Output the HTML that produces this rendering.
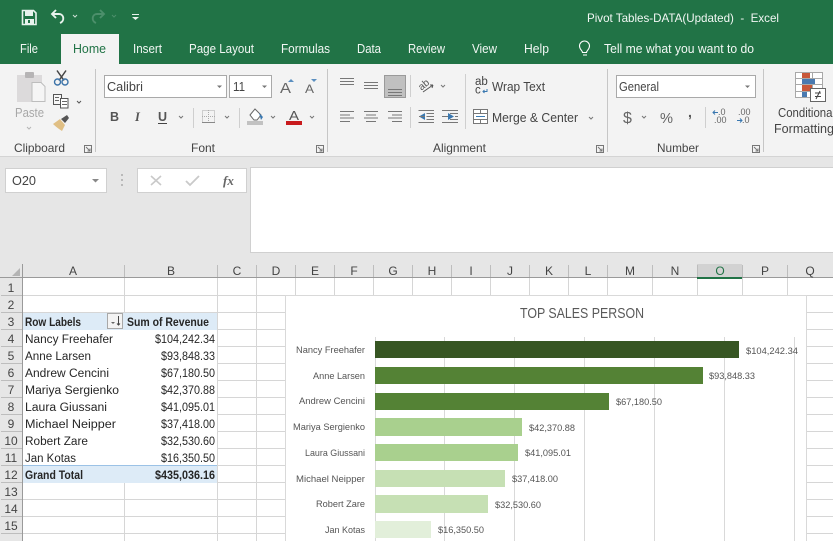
<!DOCTYPE html>
<html><head><meta charset="utf-8"><title>Pivot Tables-DATA(Updated) - Excel</title>
<style>
html,body{margin:0;padding:0;background:#fff;overflow:hidden}
svg{display:block;font-family:"Liberation Sans",sans-serif}
.w{fill:#f2f7f4}.t{fill:#444}.c{fill:#262626}.l{stroke:#777;stroke-width:1;fill:none}
.g{stroke:#d6d6d6;stroke-width:1}.ch{stroke:#777;stroke-width:1;fill:none}
.h{fill:#444;font-size:12px;text-anchor:middle}
.n{fill:#555;font-size:9.5px}
</style></head><body>
<svg width="833" height="541" viewBox="0 0 833 541" xmlns="http://www.w3.org/2000/svg">
<!-- title bar -->
<rect width="833" height="64" fill="#217346"/>
<path d="M22.500 10.500h11l2.500 2.500v11.500h-13.500z" fill="none" stroke="#e8f3ed" stroke-width="1.600"/>
<rect x="25" y="11" width="8" height="5" fill="#e8f3ed"/><rect x="25" y="19" width="9" height="5" fill="#e8f3ed"/><rect x="28" y="20" width="2" height="3" fill="#217346"/>
<path d="M56 10l-4 4 4 4M52 14h7c5 0 6 7 1 9" fill="none" stroke="#e8f3ed" stroke-width="1.900"/>
<path d="M73 15l2 2 2-2" fill="none" stroke="#cfe0d6"/>
<path d="M100 10l4 4-4 4M104 14h-7c-5 0-6 7-1 9" fill="none" stroke="#4c8f6b" stroke-width="1.900"/>
<path d="M112 15l2 2 2-2" fill="none" stroke="#4c8f6b"/>
<rect x="132" y="14" width="7" height="1" fill="#e8f3ed"/><path d="M132 17h7l-3.500 3z" fill="#e8f3ed"/>
<text x="587" y="22" class="w" font-size="12" textLength="192" lengthAdjust="spacingAndGlyphs" xml:space="preserve">Pivot Tables-DATA(Updated)  -  Excel</text>
<!-- tabs -->
<rect x="61" y="34" width="58" height="31" fill="#f3f3f3"/>
<g font-size="12.500">
<text x="20" y="53" class="w" textLength="18" lengthAdjust="spacingAndGlyphs">File</text>
<text x="73" y="53" fill="#217346" textLength="33" lengthAdjust="spacingAndGlyphs">Home</text>
<text x="133" y="53" class="w" textLength="29" lengthAdjust="spacingAndGlyphs">Insert</text>
<text x="189" y="53" class="w" textLength="65" lengthAdjust="spacingAndGlyphs">Page Layout</text>
<text x="281" y="53" class="w" textLength="49" lengthAdjust="spacingAndGlyphs">Formulas</text>
<text x="357" y="53" class="w" textLength="24" lengthAdjust="spacingAndGlyphs">Data</text>
<text x="408" y="53" class="w" textLength="37" lengthAdjust="spacingAndGlyphs">Review</text>
<text x="472" y="53" class="w" textLength="25" lengthAdjust="spacingAndGlyphs">View</text>
<text x="524" y="53" class="w" textLength="25" lengthAdjust="spacingAndGlyphs">Help</text>
<text x="604" y="53" class="w" textLength="150" lengthAdjust="spacingAndGlyphs">Tell me what you want to do</text>
</g>
<path d="M583 55h4M582.500 52.500c0-2-3-3-3-6.500a5 5 0 0 1 10 0c0 3.500-3 4.500-3 6.500z" fill="none" stroke="#fff" stroke-width="1.100"/>
<!-- ribbon -->
<rect y="64" width="833" height="92" fill="#f3f3f3"/>
<rect y="156" width="833" height="108" fill="#e6e6e6"/>
<rect y="156" width="833" height="1" fill="#d4d4d4"/>
<g fill="#c6c6c6"><rect x="95" y="69" width="1" height="83"/><rect x="327" y="69" width="1" height="83"/><rect x="607" y="69" width="1" height="83"/><rect x="763" y="69" width="1" height="83"/></g>
<!-- clipboard -->
<rect x="17" y="75" width="25" height="27" fill="#dcdadb"/><rect x="25" y="72" width="9" height="6" rx="1" fill="#b6b4b5"/>
<path d="M32 82.500h9l4 4v15h-13z" fill="#f5f5f5" stroke="#bdbdbd"/>
<text x="15" y="117" font-size="13" fill="#a8a8a8" textLength="29" lengthAdjust="spacingAndGlyphs">Paste</text>
<path d="M27 127l2 2 2-2" fill="none" stroke="#b5b5b5"/>
<path d="M57 70.500l7 10M66 70.500l-7 10" stroke="#444" stroke-width="1.500"/><circle cx="57.500" cy="82" r="3" fill="none" stroke="#3c73a8" stroke-width="1.400"/><circle cx="65" cy="82" r="3" fill="none" stroke="#3c73a8" stroke-width="1.400"/>
<path d="M53.500 94.500h8v10h-8z" fill="#f6f6f6" stroke="#555"/>
<path d="M60.500 98.500h7.500v9.500h-7.500z" fill="#fff" stroke="#555"/>
<path d="M55 97.500h4M55 100.500h4M62 101.500h5M62 104.500h5" stroke="#666"/>
<path d="M77 101l2 2 2-2" fill="none" stroke="#555"/>
<path d="M53 124l7-5 5 6-3 6c-3-2-6-4-9-7z" fill="#e0bf84"/><path d="M61 119l6-4 2 3-4 5z" fill="#555"/>
<text x="14" y="152" font-size="12" fill="#444" textLength="51" lengthAdjust="spacingAndGlyphs">Clipboard</text>
<path d="M84.500 145.500h7v7h-7z" class="ch"/><path d="M86 147l4 4M90 148.500v2.500h-2.500" class="ch"/>
<!-- font -->
<rect x="104.500" y="75.500" width="122" height="22" fill="#fff" stroke="#a9a9a9"/>
<rect x="229.500" y="75.500" width="42" height="22" fill="#fff" stroke="#a9a9a9"/>
<text x="107" y="91" font-size="12.500" fill="#444" textLength="36" lengthAdjust="spacingAndGlyphs">Calibri</text>
<text x="233" y="91" font-size="12.500" fill="#444" textLength="12" lengthAdjust="spacingAndGlyphs">11</text>
<path d="M217 85.500h5l-2.500 2.500zM262 85.500h5l-2.500 2.500z" fill="#777"/>
<text x="280" y="93" font-size="15" fill="#666" textLength="11" lengthAdjust="spacingAndGlyphs">A</text>
<path d="M288 82l3-3 3 3z" fill="#5b8fc0"/>
<text x="305" y="93" font-size="12" fill="#666" textLength="9" lengthAdjust="spacingAndGlyphs">A</text>
<path d="M311 79h6l-3 3z" fill="#5b8fc0"/>
<text x="110" y="121" font-size="12.500" font-weight="700" fill="#555">B</text>
<text x="135" y="121" font-size="12.500" font-style="italic" font-family="Liberation Serif" fill="#555" font-weight="700">I</text>
<text x="158" y="121" font-size="12.500" font-weight="700" fill="#555">U</text><rect x="158" y="123" width="9" height="1" fill="#444"/>
<path d="M179 116l2 2 2-2M225 116l2 2 2-2M271 116l2 2 2-2M310 116l2 2 2-2" fill="none" stroke="#777"/>
<rect x="193" y="108" width="1" height="20" fill="#cfcfcf"/><rect x="239" y="108" width="1" height="20" fill="#cfcfcf"/>
<rect x="202.500" y="110.500" width="12" height="12" fill="none" stroke="#aaa" stroke-dasharray="1 1"/><path d="M208.500 110v13M202 116.500h13" stroke="#aaa" stroke-dasharray="1 1"/><rect x="202" y="122" width="13" height="1" fill="#888"/>
<path d="M250 115l5-6 6 6-4 5h-3z" fill="#fff" stroke="#666"/><path d="M259 113l4 4-2 3z" fill="#3a78b0"/><rect x="247" y="121" width="16" height="4" fill="#c2c2c2"/>
<text x="289" y="120" font-size="13" fill="#555" textLength="10" lengthAdjust="spacingAndGlyphs">A</text><rect x="286" y="121" width="16" height="4" fill="#c81a1d"/>
<text x="191" y="152" font-size="12" fill="#444" textLength="24" lengthAdjust="spacingAndGlyphs">Font</text>
<path d="M316.500 145.500h7v7h-7z" class="ch"/><path d="M318 147l4 4M322 148.500v2.500h-2.500" class="ch"/>
<!-- alignment -->
<rect x="384.500" y="75.500" width="21" height="22" fill="#c0c0c0" stroke="#9a9a9a"/>
<path d="M340 78.500h14M340 81.500h14M340 84.500h14M364 82.500h14M364 85.500h14M364 88.500h14M388 89.500h14M388 92.500h14M388 95.500h14" class="l"/>
<path d="M340 111.500h14M340 115h10M340 118h14M340 121.500h10M364 111.500h14M366 115h10M364 118h14M366 121.500h10M388 111.500h14M392 115h10M388 118h14M392 121.500h10" class="l"/>
<rect x="410" y="75" width="1" height="22" fill="#cfcfcf"/><rect x="410" y="107" width="1" height="21" fill="#cfcfcf"/><rect x="465" y="74" width="1" height="55" fill="#cfcfcf"/>
<text x="419" y="88" font-size="10" fill="#555" transform="rotate(-40 424 86)">ab</text><path d="M423 92l10-7M433 85l-3 0M433 85l-1 3" fill="none" stroke="#555"/>
<path d="M441 85l2 2 2-2" fill="none" stroke="#777"/>
<path d="M425 113l-6 3.500 6 3.500z" fill="#3a78b0"/><path d="M419 116.500h6M418.500 110.500h15.500M426.500 113.500h7.500M426.500 116.500h7.500M426.500 119.500h7.500M418.500 122.500h15.500" stroke="#777"/>
<path d="M448 113l6 3.500-6 3.500z" fill="#3a78b0"/><path d="M442 116.500h6M442 110.500h16M450 113.500h8M455 116.500h3M450 119.500h8M442 122.500h16" stroke="#777"/>
<text x="475" y="85" font-size="11.500" fill="#444">ab</text><text x="475" y="93.500" font-size="11.500" fill="#444">c</text><path d="M487 89v2.500h-4M484.500 90l-1.500 1.500 1.500 1.500" fill="none" stroke="#3a78b0"/>
<text x="492" y="91" font-size="12.500" fill="#444" textLength="53" lengthAdjust="spacingAndGlyphs">Wrap Text</text>
<rect x="473.500" y="109.500" width="14" height="14" fill="#fff" stroke="#777"/><path d="M474 113.500h13M474 119.500h13M480.500 110v3M480.500 120v3" stroke="#777"/><path d="M476 116.500h9" stroke="#3a78b0"/>
<text x="492" y="122" font-size="12.500" fill="#444" textLength="86" lengthAdjust="spacingAndGlyphs">Merge &amp; Center</text>
<path d="M589 117l2 2 2-2" fill="none" stroke="#777"/>
<text x="433" y="152" font-size="12" fill="#444" textLength="53" lengthAdjust="spacingAndGlyphs">Alignment</text>
<path d="M596.500 145.500h7v7h-7z" class="ch"/><path d="M598 147l4 4M602 148.500v2.500h-2.500" class="ch"/>
<!-- number -->
<rect x="616.500" y="75.500" width="139" height="22" fill="#fff" stroke="#a9a9a9"/>
<text x="619" y="91" font-size="12.500" fill="#444" textLength="40" lengthAdjust="spacingAndGlyphs">General</text>
<path d="M745 85.500h5l-2.500 2.500z" fill="#777"/>
<text x="623" y="123" font-size="16" fill="#666">$</text><path d="M642 116l2 2 2-2" fill="none" stroke="#777"/>
<text x="660" y="123" font-size="15" fill="#666" textLength="13" lengthAdjust="spacingAndGlyphs">%</text>
<text x="688" y="117" font-size="14" font-weight="700" fill="#555">,</text>
<rect x="705" y="107" width="1" height="21" fill="#cfcfcf"/>
<g font-size="9" fill="#666"><text x="718" y="115">.0</text><text x="714" y="123">.00</text><text x="738" y="115">.00</text><text x="742" y="123">.0</text></g>
<path d="M718 112.500h-5M715 110.500l-2 2 2 2M737 120.500h5M740 118.500l2 2-2 2" fill="none" stroke="#3a78b0"/>
<text x="657" y="152" font-size="12" fill="#444" textLength="42" lengthAdjust="spacingAndGlyphs">Number</text>
<path d="M752.500 145.500h7v7h-7z" class="ch"/><path d="M754 147l4 4M758 148.500v2.500h-2.500" class="ch"/>
<!-- conditional -->
<path d="M795.500 72.500h27v25h-27zM795.500 78.500h27M795.500 84.500h27M795.500 91.500h27M802.500 72v26M812.500 72v26" fill="#fff" stroke="#a8a8a8"/>
<rect x="802" y="73" width="8" height="5" fill="#c8583a"/><rect x="802" y="79" width="13" height="5" fill="#4a7ab0"/><rect x="802" y="85" width="10" height="6" fill="#c8583a"/><rect x="802" y="92" width="5" height="5" fill="#4a7ab0"/>
<rect x="810.500" y="88.500" width="15" height="13" fill="#fff" stroke="#666"/>
<path d="M815 93h6M815 96.500h6M820 91l-4 8" stroke="#444"/>
<text x="778" y="117" font-size="12.500" fill="#444" textLength="57" lengthAdjust="spacingAndGlyphs">Conditional</text>
<text x="774" y="133" font-size="12.500" fill="#444" textLength="60" lengthAdjust="spacingAndGlyphs">Formatting</text>
<!-- formula bar -->
<rect x="5.500" y="168.500" width="101" height="24" fill="#fff" stroke="#d0d0d0"/>
<text x="12" y="185" font-size="13" fill="#444" textLength="24" lengthAdjust="spacingAndGlyphs">O20</text>
<path d="M92 179h7l-3.500 3.500z" fill="#888"/>
<path d="M122 174v2M122 179v2M122 184v2" stroke="#aaa" stroke-width="1.500"/>
<rect x="137.500" y="168.500" width="109" height="24" fill="#fff" stroke="#d0d0d0"/>
<path d="M151 176l10 9M161 176l-10 9" stroke="#c9c9c9" stroke-width="1.600"/>
<path d="M186 181l4 4 9-9" fill="none" stroke="#c9c9c9" stroke-width="1.800"/>
<text x="223" y="185" font-size="13" font-family="Liberation Serif" font-style="italic" font-weight="700" fill="#666">fx</text>
<rect x="250.500" y="167.500" width="590" height="85" fill="#fff" stroke="#d0d0d0"/>
<!-- sheet -->
<rect y="264" width="833" height="277" fill="#fff"/>
<rect y="264" width="833" height="14" fill="#e6e6e6"/>
<rect y="278" width="22" height="263" fill="#e6e6e6"/>
<path d="M20 268v8h-8z" fill="#b4b4b4"/>
<rect x="697" y="264" width="45" height="14" fill="#d2d2d2"/>
<!-- gridlines -->
<g class="g">
<path d="M22 295.500H833M22 312.500H833M217 329.500H833M217 346.500H833M217 363.500H833M217 380.500H833M217 397.500H833M217 414.500H833M217 431.500H833M217 448.500H833M217 465.500H833M217 482.500H833M22 499.500H833M22 516.500H833M22 533.500H833"/>
<path d="M124.500 278V312M124.500 483V541M217.500 278V541M256.500 278V541M295.500 278V541M334.500 278V296M373.500 278V296M412.500 278V296M451.500 278V296M490.500 278V296M529.500 278V296M568.500 278V296M607.500 278V296M652.500 278V296M697.500 278V296M742.500 278V296M787.500 278V541"/>
</g>
<!-- header separators -->
<g stroke="#bdbdbd"><path d="M124.500 265v13M217.500 265v13M256.500 265v13M295.500 265v13M334.500 265v13M373.500 265v13M412.500 265v13M451.500 265v13M490.500 265v13M529.500 265v13M568.500 265v13M607.500 265v13M652.500 265v13M697.500 265v13M742.500 265v13M787.500 265v13"/>
<path d="M1 295.500h21M1 312.500h21M1 329.500h21M1 346.500h21M1 363.500h21M1 380.500h21M1 397.500h21M1 414.500h21M1 431.500h21M1 448.500h21M1 465.500h21M1 482.500h21M1 499.500h21M1 516.500h21M1 533.500h21"/></g>
<rect y="277" width="833" height="1" fill="#9a9a9a"/><rect x="22" y="264" width="1" height="277" fill="#9a9a9a"/>
<rect x="697" y="277" width="45" height="2" fill="#217346"/>
<g class="h">
<text x="73" y="275">A</text><text x="171" y="275">B</text><text x="237" y="275">C</text><text x="276" y="275">D</text><text x="315" y="275">E</text><text x="354" y="275">F</text><text x="393" y="275">G</text><text x="432" y="275">H</text><text x="471" y="275">I</text><text x="510" y="275">J</text><text x="549" y="275">K</text><text x="588" y="275">L</text><text x="630" y="275">M</text><text x="675" y="275">N</text><text x="720" y="275" fill="#217346">O</text><text x="765" y="275">P</text><text x="810" y="275">Q</text>
<text x="11" y="292">1</text><text x="11" y="309">2</text><text x="11" y="326">3</text><text x="11" y="343">4</text><text x="11" y="360">5</text><text x="11" y="377">6</text><text x="11" y="394">7</text><text x="11" y="411">8</text><text x="11" y="428">9</text><text x="11" y="445">10</text><text x="11" y="462">11</text><text x="11" y="479">12</text><text x="11" y="496">13</text><text x="11" y="513">14</text><text x="11" y="530">15</text>
</g>
<!-- pivot -->
<rect x="23" y="313" width="194" height="17" fill="#ddebf7"/>
<rect x="23" y="466" width="194" height="17" fill="#ddebf7"/><rect x="23" y="465" width="194" height="1" fill="#9bc2e6"/>
<rect x="107.500" y="313.500" width="15" height="15" fill="#f3f3f3" stroke="#a8a8a8"/>
<path d="M111 322h4l-2 2z" fill="#666"/><path d="M118.500 316v9M117 323.500l1.500 1.500 1.500-1.500" fill="none" stroke="#444"/>
<g font-size="11.500" class="c">
<text x="25" y="326" font-weight="700" textLength="56" lengthAdjust="spacingAndGlyphs">Row Labels</text>
<text x="127" y="326" font-weight="700" textLength="82" lengthAdjust="spacingAndGlyphs">Sum of Revenue</text>
<text x="25" y="343" textLength="88" lengthAdjust="spacingAndGlyphs">Nancy Freehafer</text>
<text x="25" y="360" textLength="66" lengthAdjust="spacingAndGlyphs">Anne Larsen</text>
<text x="25" y="377" textLength="84" lengthAdjust="spacingAndGlyphs">Andrew Cencini</text>
<text x="25" y="394" textLength="94" lengthAdjust="spacingAndGlyphs">Mariya Sergienko</text>
<text x="25" y="411" textLength="82" lengthAdjust="spacingAndGlyphs">Laura Giussani</text>
<text x="25" y="428" textLength="91" lengthAdjust="spacingAndGlyphs">Michael Neipper</text>
<text x="25" y="445" textLength="63" lengthAdjust="spacingAndGlyphs">Robert Zare</text>
<text x="25" y="462" textLength="51" lengthAdjust="spacingAndGlyphs">Jan Kotas</text>
<text x="25" y="479" font-weight="700" textLength="58" lengthAdjust="spacingAndGlyphs">Grand Total</text>
<text x="155" y="343" textLength="60" lengthAdjust="spacingAndGlyphs">$104,242.34</text>
<text x="161" y="360" textLength="54" lengthAdjust="spacingAndGlyphs">$93,848.33</text>
<text x="161" y="377" textLength="54" lengthAdjust="spacingAndGlyphs">$67,180.50</text>
<text x="161" y="394" textLength="54" lengthAdjust="spacingAndGlyphs">$42,370.88</text>
<text x="161" y="411" textLength="54" lengthAdjust="spacingAndGlyphs">$41,095.01</text>
<text x="161" y="428" textLength="54" lengthAdjust="spacingAndGlyphs">$37,418.00</text>
<text x="161" y="445" textLength="54" lengthAdjust="spacingAndGlyphs">$32,530.60</text>
<text x="161" y="462" textLength="54" lengthAdjust="spacingAndGlyphs">$16,350.50</text>
<text x="155" y="479" font-weight="700" textLength="60" lengthAdjust="spacingAndGlyphs">$435,036.16</text>
</g>
<!-- chart -->
<rect x="285.500" y="295.500" width="521" height="250" fill="#fff" stroke="#d9d9d9"/>
<text x="520" y="318" font-size="14.500" fill="#595959" textLength="124" lengthAdjust="spacingAndGlyphs">TOP SALES PERSON</text>
<path d="M375.500 337V541M444.500 337V541M514.500 337V541M584.500 337V541M654.500 337V541M724.500 337V541M794.500 337V541" stroke="#d9d9d9"/>
<rect x="375" y="341" width="364" height="17" fill="#375623"/>
<rect x="375" y="367" width="328" height="17" fill="#548235"/>
<rect x="375" y="393" width="234" height="17" fill="#548235"/>
<rect x="375" y="418" width="147" height="18" fill="#a9d08e"/>
<rect x="375" y="444" width="143" height="17" fill="#a9d08e"/>
<rect x="375" y="470" width="130" height="17" fill="#c6e0b4"/>
<rect x="375" y="495" width="113" height="18" fill="#c6e0b4"/>
<rect x="375" y="521" width="56" height="17" fill="#e2efda"/>
<g class="n">
<text x="296" y="353" textLength="69" lengthAdjust="spacingAndGlyphs">Nancy Freehafer</text>
<text x="313" y="379" textLength="52" lengthAdjust="spacingAndGlyphs">Anne Larsen</text>
<text x="299" y="404" textLength="66" lengthAdjust="spacingAndGlyphs">Andrew Cencini</text>
<text x="293" y="430" textLength="72" lengthAdjust="spacingAndGlyphs">Mariya Sergienko</text>
<text x="305" y="456" textLength="60" lengthAdjust="spacingAndGlyphs">Laura Giussani</text>
<text x="296" y="482" textLength="69" lengthAdjust="spacingAndGlyphs">Michael Neipper</text>
<text x="316" y="507" textLength="49" lengthAdjust="spacingAndGlyphs">Robert Zare</text>
<text x="325" y="533" textLength="40" lengthAdjust="spacingAndGlyphs">Jan Kotas</text>
<text x="746" y="354" textLength="52" lengthAdjust="spacingAndGlyphs">$104,242.34</text>
<text x="709" y="379" textLength="46" lengthAdjust="spacingAndGlyphs">$93,848.33</text>
<text x="616" y="405" textLength="46" lengthAdjust="spacingAndGlyphs">$67,180.50</text>
<text x="529" y="431" textLength="46" lengthAdjust="spacingAndGlyphs">$42,370.88</text>
<text x="525" y="456" textLength="46" lengthAdjust="spacingAndGlyphs">$41,095.01</text>
<text x="512" y="482" textLength="46" lengthAdjust="spacingAndGlyphs">$37,418.00</text>
<text x="495" y="508" textLength="46" lengthAdjust="spacingAndGlyphs">$32,530.60</text>
<text x="438" y="533" textLength="46" lengthAdjust="spacingAndGlyphs">$16,350.50</text>
</g>
</svg>
</body></html>
